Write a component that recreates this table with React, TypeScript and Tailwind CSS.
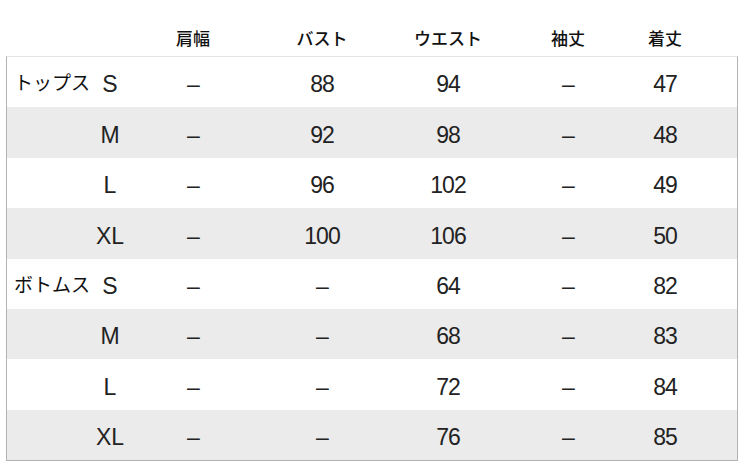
import React from "react"

type Row = {
  category?: string
  size: string
  values: string[]
}

const headers = ["肩幅", "バスト", "ウエスト", "袖丈", "着丈"]

const rows: Row[] = [
  { category: "トップス", size: "S", values: ["–", "88", "94", "–", "47"] },
  { size: "M", values: ["–", "92", "98", "–", "48"] },
  { size: "L", values: ["–", "96", "102", "–", "49"] },
  { size: "XL", values: ["–", "100", "106", "–", "50"] },
  { category: "ボトムス", size: "S", values: ["–", "–", "64", "–", "82"] },
  { size: "M", values: ["–", "–", "68", "–", "83"] },
  { size: "L", values: ["–", "–", "72", "–", "84"] },
  { size: "XL", values: ["–", "–", "76", "–", "85"] },
]

const grid =
  "grid grid-cols-[83px_40px_126px_132px_120px_120px_74px_1fr] items-center"

const jp = "font-['Noto_Sans_CJK_JP',sans-serif]"
const num = "font-['Liberation_Sans',Arial,sans-serif]"

const App = () => {
  return (
    <div className="w-[747px] h-[468px] bg-white overflow-hidden">
      <div className="ml-[6px] w-[732px]">
        {/* header */}
        <div className={`${grid} h-[56px] items-end pb-[6px] pl-px`}>
          <div />
          <div />
          {headers.map((h) => (
            <div
              key={h}
              className={`${jp} text-center text-[17px] font-medium text-[#111]`}
            >
              {h}
            </div>
          ))}
        </div>

        <div className="border-t border-t-[#e3e3e3] border-x border-b border-x-[#b3b3b3] border-b-[#b3b3b3]">
          {rows.map((r, i) => (
            <div
              key={i}
              className={`${grid} h-[50.4px] pt-[5px] ${
                i % 2 === 1 ? "bg-[#ebebeb]" : "bg-white"
              }`}
            >
              <div
                className={`${jp} pl-[7px] text-[19px] font-normal text-[#111] whitespace-nowrap -mt-[4px]`}
              >
                {r.category}
              </div>
              <div className={`${num} text-center text-[23px] text-[#222]`}>
                {r.size}
              </div>
              {r.values.map((v, j) => (
                <div
                  key={j}
                  className={`${num} text-center text-[23px] text-[#222] tracking-[-1px]`}
                >
                  {v}
                </div>
              ))}
              <div />
            </div>
          ))}
        </div>
      </div>
    </div>
  )
}

export default App
